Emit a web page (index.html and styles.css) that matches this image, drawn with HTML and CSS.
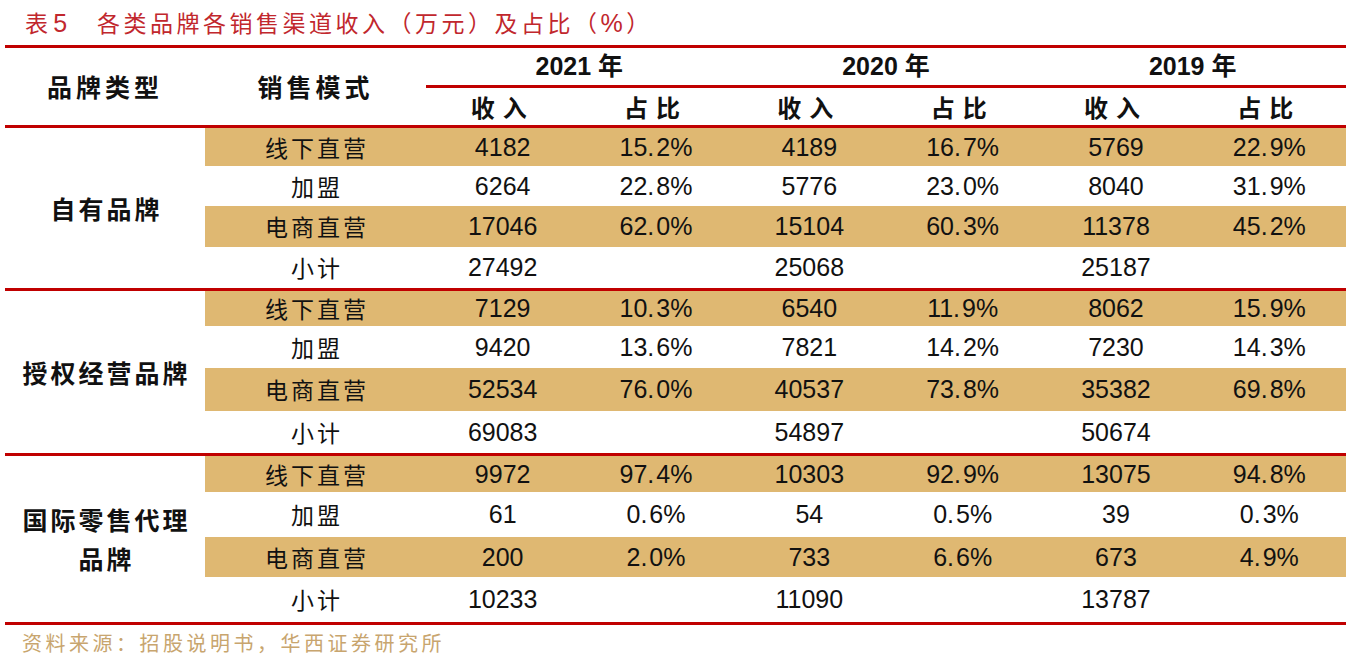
FILE: index.html
```html
<!DOCTYPE html>
<html lang="zh-CN">
<head>
<meta charset="utf-8">
<title>表5 各类品牌各销售渠道收入及占比</title>
<link rel="stylesheet" href="styles.css">
</head>
<body>
<div class="page">
  <div class="title"><span class="t-no">表 <span class="num">5</span></span><span class="t-text">各类品牌各销售渠道收入（万元）及占比（<span class="num">%</span>）</span></div>
  <table class="data">
    <colgroup>
      <col class="c-brand"><col class="c-mode">
      <col class="c-val"><col class="c-val"><col class="c-val"><col class="c-val"><col class="c-val"><col class="c-val">
    </colgroup>
    <thead>
      <tr class="h1">
        <th rowspan="2" class="hb">品牌类型</th>
        <th rowspan="2" class="hb">销售模式</th>
        <th colspan="2" class="yr">2021 年</th>
        <th colspan="2" class="yr">2020 年</th>
        <th colspan="2" class="yr">2019 年</th>
      </tr>
      <tr class="h2">
        <th class="sub">收入</th><th class="sub">占比</th>
        <th class="sub">收入</th><th class="sub">占比</th>
        <th class="sub">收入</th><th class="sub">占比</th>
      </tr>
    </thead>
    <tbody class="g1">
      <tr class="r1 shade">
        <td rowspan="4" class="brand end">自有品牌</td>
        <td class="mode">线下直营</td><td>4182</td><td>15<span class="dot">.</span>2%</td><td>4189</td><td>16<span class="dot">.</span>7%</td><td>5769</td><td>22<span class="dot">.</span>9%</td>
      </tr>
      <tr class="r2">
        <td class="mode">加盟</td><td>6264</td><td>22<span class="dot">.</span>8%</td><td>5776</td><td>23<span class="dot">.</span>0%</td><td>8040</td><td>31<span class="dot">.</span>9%</td>
      </tr>
      <tr class="r3 shade">
        <td class="mode">电商直营</td><td>17046</td><td>62<span class="dot">.</span>0%</td><td>15104</td><td>60<span class="dot">.</span>3%</td><td>11378</td><td>45<span class="dot">.</span>2%</td>
      </tr>
      <tr class="r4 last">
        <td class="mode end">小计</td><td class="end">27492</td><td class="end"></td><td class="end">25068</td><td class="end"></td><td class="end">25187</td><td class="end"></td>
      </tr>
    </tbody>
    <tbody class="g2">
      <tr class="r1 shade">
        <td rowspan="4" class="brand end">授权经营品牌</td>
        <td class="mode">线下直营</td><td>7129</td><td>10<span class="dot">.</span>3%</td><td>6540</td><td>11<span class="dot">.</span>9%</td><td>8062</td><td>15<span class="dot">.</span>9%</td>
      </tr>
      <tr class="r2">
        <td class="mode">加盟</td><td>9420</td><td>13<span class="dot">.</span>6%</td><td>7821</td><td>14<span class="dot">.</span>2%</td><td>7230</td><td>14<span class="dot">.</span>3%</td>
      </tr>
      <tr class="r3 shade">
        <td class="mode">电商直营</td><td>52534</td><td>76<span class="dot">.</span>0%</td><td>40537</td><td>73<span class="dot">.</span>8%</td><td>35382</td><td>69<span class="dot">.</span>8%</td>
      </tr>
      <tr class="r4 last">
        <td class="mode end">小计</td><td class="end">69083</td><td class="end"></td><td class="end">54897</td><td class="end"></td><td class="end">50674</td><td class="end"></td>
      </tr>
    </tbody>
    <tbody class="g3">
      <tr class="r1 shade">
        <td rowspan="4" class="brand end">国际零售代理<br>品牌</td>
        <td class="mode">线下直营</td><td>9972</td><td>97<span class="dot">.</span>4%</td><td>10303</td><td>92<span class="dot">.</span>9%</td><td>13075</td><td>94<span class="dot">.</span>8%</td>
      </tr>
      <tr class="r2">
        <td class="mode">加盟</td><td>61</td><td>0<span class="dot">.</span>6%</td><td>54</td><td>0<span class="dot">.</span>5%</td><td>39</td><td>0<span class="dot">.</span>3%</td>
      </tr>
      <tr class="r3 shade">
        <td class="mode">电商直营</td><td>200</td><td>2<span class="dot">.</span>0%</td><td>733</td><td>6<span class="dot">.</span>6%</td><td>673</td><td>4<span class="dot">.</span>9%</td>
      </tr>
      <tr class="r4 last">
        <td class="mode end">小计</td><td class="end">10233</td><td class="end"></td><td class="end">11090</td><td class="end"></td><td class="end">13787</td><td class="end"></td>
      </tr>
    </tbody>
  </table>
  <div class="source">资料来源：招股说明书，华西证券研究所</div>
</div>
</body>
</html>
```

FILE: styles.css
```css
html, body {
  margin: 0;
  padding: 0;
  background: #ffffff;
}

.page {
  padding: 0 12px 0 5px;
  font-family: "Noto Sans CJK SC", sans-serif;
  color: #111111;
}

.title {
  height: 45px;
  display: flex;
  align-items: center;
  padding-left: 20px;
  padding-top: 2px;
  box-sizing: border-box;
  color: #c1272d;
  font-size: 23px;
  line-height: 1;
}

.title .num {
  font-family: "Liberation Sans", sans-serif;
  font-size: 25px;
}

.t-no {
  margin-right: 30px;
}

.t-text {
  letter-spacing: 3.5px;
}

.data {
  width: 1341px;
  table-layout: fixed;
  border-collapse: separate;
  border-spacing: 0;
  border-top: 3px solid #c00000;
}

.c-brand { width: 200px; }
.c-mode { width: 221px; }

.data th,
.data td {
  padding: 0;
  text-align: center;
  vertical-align: middle;
  line-height: 1;
}

.data th {
  font-weight: 700;
}

.h1 { height: 40px; }
.h2 { height: 40px; }

.hb {
  font-size: 25px;
  letter-spacing: 4px;
  padding-left: 4px;
  border-bottom: 3px solid #c00000;
}

.yr {
  font-family: "Liberation Sans", "Noto Sans CJK SC", sans-serif;
  font-size: 25px;
  border-bottom: 3px solid #c00000;
  padding-top: 2px;
}

.sub {
  font-size: 24px;
  letter-spacing: 8px;
  padding-left: 8px;
  border-bottom: 3px solid #c00000;
}

.data td {
  font-family: "Liberation Sans", sans-serif;
  font-size: 25px;
  color: #111111;
}

.data td.mode {
  font-family: "Noto Sans CJK SC", sans-serif;
  font-size: 23px;
  letter-spacing: 3px;
  padding-left: 3px;
}

.data td.brand {
  font-family: "Noto Sans CJK SC", sans-serif;
  font-weight: 700;
  font-size: 25px;
  letter-spacing: 3px;
  padding-left: 3px;
  line-height: 39px;
  background: #ffffff;
}

.dot {
  margin-right: 2px;
}

.shade td {
  background: #dfb872;
}

.shade td.brand {
  background: #ffffff;
}

.data td.end {
  border-bottom: 3px solid #c00000;
}

.g1 .r1 { height: 38px; }
.g1 .r2 { height: 40px; }
.g1 .r3 { height: 41px; }
.g1 .r4 { height: 44px; }

.g2 .r1 { height: 35px; }
.g2 .r2 { height: 42px; }
.g2 .r3 { height: 43px; }
.g2 .r4 { height: 45px; }

.g3 .r1 { height: 36px; }
.g3 .r2 { height: 45px; }
.g3 .r3 { height: 40px; }
.g3 .r4 { height: 48px; }

.source {
  padding: 6px 0 0 17px;
  font-size: 20px;
  letter-spacing: 3.5px;
  color: #c8a56e;
  line-height: 1.2;
}
```
